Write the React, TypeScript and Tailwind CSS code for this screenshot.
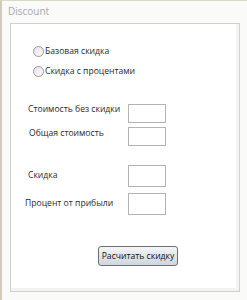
import React from 'react';

const FONT = { fontFamily: '"Open Sans", "Noto Sans", sans-serif' };

function Radio({ label }: { label: string }) {
  return (
    <div className="flex items-center h-[14px] pl-[22px]">
      <span className="w-[11px] h-[11px] rounded-full border border-[#9a9a9a] bg-gradient-to-br from-[#e4e4e4] to-[#fbfbfb] shrink-0" />
      <span className="ml-px text-[8.6px] leading-none text-[#2b2b2b] whitespace-nowrap">{label}</span>
    </div>
  );
}

function Field({ label, h, pl, mt }: { label: string; h: string; pl: string; mt: string }) {
  return (
    <div className="flex items-start">
      <div className={`w-[117px] shrink-0 text-[8.6px] leading-none text-[#2b2b2b] whitespace-nowrap ${pl} ${mt}`}>{label}</div>
      <div className={`w-[38px] ${h} border border-[#b3b3b3] bg-white`} />
    </div>
  );
}

export default function App() {
  return (
    <div style={FONT} className="w-[247px] h-[300px] bg-[#fafaf8] border-t border-[#d9dcc0] border-l-2 border-l-[#d2cbbd] flex flex-col overflow-hidden">
      <div className="h-[22px] pl-[6px] pt-[5px] text-[10px] leading-none text-[#a9a9a9]">Discount</div>
      <div className="ml-[8px] mr-[7px] h-[269px] border border-[#d0d0d0] bg-white shadow-[inset_-3px_-3px_0_#f3f3f3]">
        <div className="mt-[20px] flex flex-col gap-[6px]">
          <Radio label="Базовая скидка" />
          <Radio label="Скидка с процентами" />
        </div>
        <div className="mt-[26px]">
          <Field label="Стоимость без скидки" h="h-[19px]" pl="pl-[17px]" mt="mt-[1px]" />
        </div>
        <div className="mt-[4px]">
          <Field label="Общая стоимость" h="h-[19px]" pl="pl-[18px]" mt="mt-[2px]" />
        </div>
        <div className="mt-[19px]">
          <Field label="Скидка" h="h-[22px]" pl="pl-[17px]" mt="mt-[6px]" />
        </div>
        <div className="mt-[6px]">
          <Field label="Процент от прибыли" h="h-[22px]" pl="pl-[14px]" mt="mt-[6px]" />
        </div>
        <div className="mt-[26px] pl-[87px]">
          <button className="w-[80px] h-[20px] rounded-[3px] border border-[#707070] bg-gradient-to-b from-[#f3f5f8] to-[#cdd6e1] text-[8.6px] leading-none text-[#111] whitespace-nowrap">
            Расчитать скидку
          </button>
        </div>
      </div>
    </div>
  );
}
